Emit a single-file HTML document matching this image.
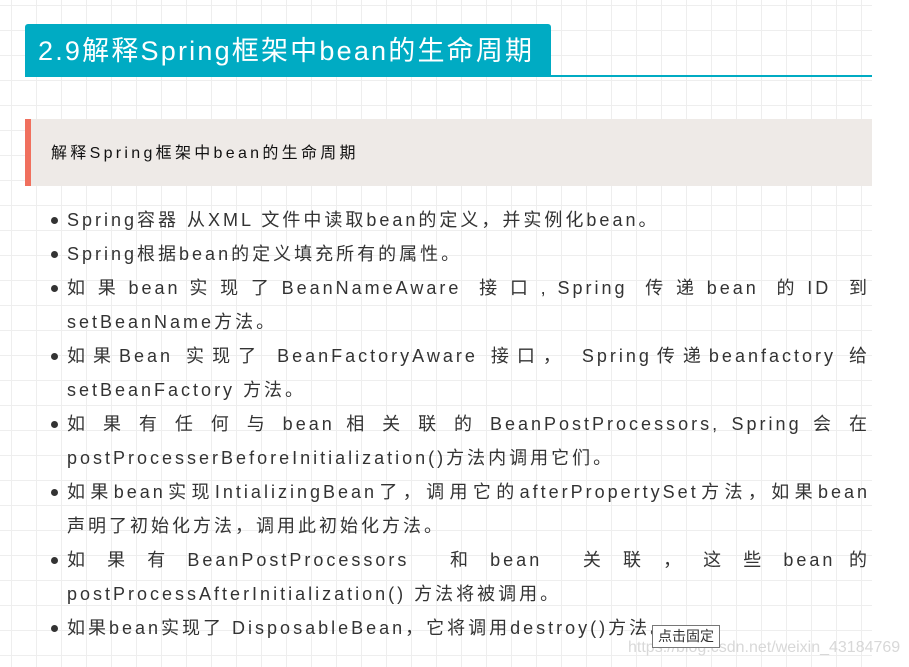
<!DOCTYPE html>
<html><head><meta charset="utf-8"><style>
html,body{margin:0;padding:0;background:#fff;width:909px;height:667px;overflow:hidden}
body{font-family:"Liberation Sans","Noto Sans CJK SC",sans-serif;color:#333;position:relative}
.grid{position:absolute;left:0;top:0;width:872px;height:667px;
background-image:linear-gradient(to right,#eeeeee 1px,transparent 1px),linear-gradient(to bottom,#eeeeee 1px,transparent 1px);
background-size:25px 25px;background-position:11px 5px}
.title{position:absolute;left:25px;top:24px;width:526px;height:52px;background:#00abc3;border-radius:3px 3px 0 0;color:#fff;font-size:27px;line-height:54px;padding-left:13px;box-sizing:border-box;letter-spacing:2.2px;white-space:nowrap}
.uline{position:absolute;left:25px;top:75px;width:847px;height:2px;background:#00abc3}
.quote{position:absolute;left:25px;top:119px;width:847px;height:67px;background:#eeeae7;border-left:6px solid #f0705e;box-sizing:border-box;font-size:16px;line-height:69px;padding-left:20px;color:#111;letter-spacing:3.3px}
ul{position:absolute;left:67px;top:203px;width:803px;margin:0;padding:0;list-style:none;font-size:18px;line-height:34px;letter-spacing:3px}
li{position:relative}
li:before{content:"";position:absolute;left:-16px;top:14px;width:7px;height:7px;border-radius:50%;background:#333}
.j{display:block;text-align:justify;text-align-last:justify}
.tip{position:absolute;left:652px;top:625px;border:1px solid #777;background:#fff;font-size:14px;padding:1px 5px;line-height:19px;color:#333}
.wm{position:absolute;left:628px;top:639px;font-size:16px;color:rgba(200,200,200,0.7)}
</style></head><body>
<div class="grid"></div>
<div class="title">2.9解释Spring框架中bean的生命周期</div>
<div class="uline"></div>
<div class="quote">解释Spring框架中bean的生命周期</div>
<ul>
<li>Spring容器 从XML 文件中读取bean的定义，并实例化bean。</li>
<li>Spring根据bean的定义填充所有的属性。</li>
<li><span class="j">如 果 bean 实 现 了 BeanNameAware &nbsp;接 口 , Spring &nbsp;传 递 bean &nbsp;的 ID &nbsp;到</span>setBeanName方法。</li>
<li><span class="j">如果Bean 实现了 BeanFactoryAware 接口， Spring传递beanfactory 给</span>setBeanFactory 方法。</li>
<li><span class="j">如 果 有 任 何 与 bean 相 关 联 的 BeanPostProcessors, Spring 会 在</span>postProcesserBeforeInitialization()方法内调用它们。</li>
<li><span class="j">如果bean实现IntializingBean了，调用它的afterPropertySet方法，如果bean</span>声明了初始化方法，调用此初始化方法。</li>
<li><span class="j">如 果 有 BeanPostProcessors &nbsp; 和 bean &nbsp; 关 联 ， 这 些 bean 的</span>postProcessAfterInitialization() 方法将被调用。</li>
<li>如果bean实现了 DisposableBean，它将调用destroy()方法。</li>
</ul>
<div class="wm">https://blog.csdn.net/weixin_43184769</div>
<div class="tip">点击固定</div>
</body></html>
